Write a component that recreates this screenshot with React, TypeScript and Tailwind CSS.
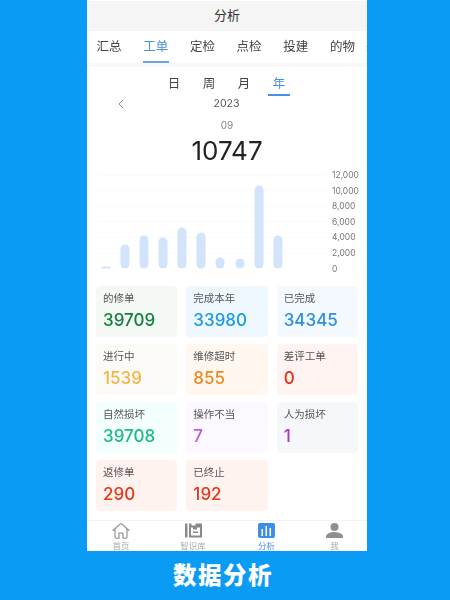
const FONT = '[font-family:Inter,"Noto_Sans_CJK_SC",sans-serif]'

const TABS = ['汇总', '工单', '定检', '点检', '投建', '的物']
const PERIODS = ['日', '周', '月', '年']

const CARDS = [
  { label: '的修单', value: '39709', bg: 'bg-[#f4f9f6]', color: 'text-[#15803d]' },
  { label: '完成本年', value: '33980', bg: 'bg-[#f0f8ff]', color: 'text-[#1a9be6]' },
  { label: '已完成', value: '34345', bg: 'bg-[#f3f9ff]', color: 'text-[#2b8fe3]' },
  { label: '进行中', value: '1539', bg: 'bg-[#fbfaf6]', color: 'text-[#f2b544]' },
  { label: '维修超时', value: '855', bg: 'bg-[#fff7f0]', color: 'text-[#ee8a1d]' },
  { label: '差评工单', value: '0', bg: 'bg-[#fff4f2]', color: 'text-[#e5301b]' },
  { label: '自然损坏', value: '39708', bg: 'bg-[#f2fffc]', color: 'text-[#1fb98a]' },
  { label: '操作不当', value: '7', bg: 'bg-[#fdf7ff]', color: 'text-[#bb5fd8]' },
  { label: '人为损坏', value: '1', bg: 'bg-[#f6f7fb]', color: 'text-[#a838c8]' },
  { label: '返修单', value: '290', bg: 'bg-[#fff3f0]', color: 'text-[#e5391c]' },
  { label: '已终止', value: '192', bg: 'bg-[#fff3f0]', color: 'text-[#e5391c]' },
]

const BARS = [
  { x: 19, h: 2 },
  { x: 38, h: 24 },
  { x: 57, h: 33 },
  { x: 76, h: 31 },
  { x: 95, h: 41 },
  { x: 114, h: 36 },
  { x: 133, h: 11 },
  { x: 153, h: 10 },
  { x: 172, h: 83 },
  { x: 191, h: 33 },
]
const LABELS = ['12,000', '10,000', '8,000', '6,000', '4,000', '2,000', '0']

function Chart() {
  return (
    <svg width="280" height="106" className="block">
      {LABELS.map((l, i) => {
        const y = 7 + i * 15.6
        return (
          <g key={l}>
            {i < 6 && <line x1="10" x2="240" y1={y} y2={y} stroke="#fafafa" strokeWidth="1" />}
            <text x="245" y={y + 3} fontSize="8.500" fill="#777" fontFamily="Inter, sans-serif">
              {l}
            </text>
          </g>
        )
      })}
      {BARS.map((b) => (
        <rect key={b.x} x={b.x - 4.5} y={100.5 - b.h} width="9" height={b.h} rx={b.h < 4 ? 1 : 4.5} fill="#d2e4fb" />
      ))}
    </svg>
  )
}

function HomeIcon() {
  return (
    <svg width="18" height="16" viewBox="0 0 18 16" fill="none" stroke="#8a8a8a" strokeWidth="1.1" strokeLinejoin="round" strokeLinecap="round">
      <path d="M1 7.500 7.800 1.400a1.800 1.800 0 0 1 2.400 0L17 7.500" />
      <path d="M3 6.500V14a1.200 1.200 0 0 0 1.200 1.200H7V10h4v5.200h2.800A1.200 1.200 0 0 0 15 14V6.500" />
    </svg>
  )
}

function BookIcon() {
  return (
    <svg width="17" height="15" viewBox="0 0 17 15" fill="#8a8a8a">
      <rect x="0" y="0.500" width="2.500" height="14" rx="0.500" />
      <path fillRule="evenodd" d="M4 .5h2.500v2h4v-2H17v14H4zM6 4.500v8h9v-8h-3v2H8v-2zm2 4h5V10H8z" />
    </svg>
  )
}

function ChartIcon() {
  return (
    <svg width="17" height="15" viewBox="0 0 17 15">
      <rect width="17" height="15" rx="2" fill="#3b8fe6" />
      <rect x="3.500" y="6" width="1.500" height="7" fill="#fff" />
      <rect x="7.500" y="3" width="1.500" height="10" fill="#fff" />
      <rect x="11.500" y="5" width="1.500" height="8" fill="#fff" />
    </svg>
  )
}

function UserIcon() {
  return (
    <svg width="17" height="15" viewBox="0 0 17 15" fill="#8f8f8f">
      <circle cx="8.500" cy="4" r="4" />
      <path d="M0 15v-1.500C0 11 4 9 8.500 9s8.500 2 8.500 4.500V15z" />
    </svg>
  )
}

const NAV = [
  { label: '首页', icon: <HomeIcon />, active: false },
  { label: '智识库', icon: <BookIcon />, active: false },
  { label: '分析', icon: <ChartIcon />, active: true },
  { label: '我', icon: <UserIcon />, active: false },
]

export default function App() {
  return (
    <div className={`w-[450px] h-[600px] overflow-hidden bg-[#0a9bf5] flex flex-col ${FONT}`}>
      <div className="w-[280px] h-[551px] ml-[87px] bg-white flex flex-col blur-[0.4px]">
        <div className="h-[30px] mt-[1px] bg-[#f5f5f5] flex items-center justify-center text-[13px] text-[#333]">分析</div>

        {/* tabs */}
        <div className="h-[32px] flex ml-[-1.300px] text-[12.500px] text-[#444] overflow-hidden">
          {TABS.map((t) => {
            const on = t === '工单'
            return (
              <div key={t} className="w-[46.700px] shrink-0 flex justify-center">
                <span className={`w-[26px] flex items-center justify-center pt-[2px] border-b-2 whitespace-nowrap ${on ? 'text-[#4a90e2] border-[#6aa5e8]' : 'border-transparent'}`}>
                  {t}
                </span>
              </div>
            )
          })}
          <span className="shrink-0 pt-[9px] text-[10px] text-[#777]">:</span>
        </div>
        <div className="h-[4px] bg-[#f8f8f8]" />

        {/* period */}
        <div className="flex justify-center pr-[1px] mt-[9px] gap-[13px] text-[12.500px] text-[#444]">
          {PERIODS.map((p) => (
            <div key={p} className={`w-[22px] h-[20px] leading-[16px] text-center border-b-2 ${p === '年' ? 'text-[#4a90e2] border-[#4a90e2]' : 'border-transparent'}`}>
              {p}
            </div>
          ))}
        </div>
        <div className="relative h-[16px] flex items-center justify-center pr-[1px] text-[10.500px] text-[#555]">
          <svg width="7" height="10" viewBox="0 0 7 10" fill="none" stroke="#888" className="absolute left-[30px] top-[3px]">
            <path d="M6 1 2 5l4 4" />
          </svg>
          2023
        </div>
        <div className="mt-[7px] text-center text-[10px] leading-[12px] text-[#888]">09</div>
        <div className="mt-[5px] text-center text-[26px] leading-[30px] text-[#222]">10747</div>

        <div className="mt-[2px]"><Chart /></div>

        {/* cards */}
        <div className="mt-[12px] px-[9px] grid grid-cols-3 gap-x-[9px] gap-y-[7.500px]">
          {CARDS.map((c) => (
            <div key={c.label} className={`h-[50.500px] rounded-[4px] px-[7px] pt-[6px] ${c.bg}`}>
              <div className="text-[10.500px] leading-[13px] text-[#555]">{c.label}</div>
              <div className={`text-[17px] leading-[22px] mt-[4px] font-medium ${c.color}`}>{c.value}</div>
            </div>
          ))}
        </div>

        {/* bottom nav */}
        <div className="mt-auto h-[31px] border-t border-[#f3f3f3] grid grid-cols-[68px_76px_71px_65px]">
          {NAV.map((n) => (
            <div key={n.label} className="flex flex-col items-center pt-[1px]">
              <div className="h-[17px] flex items-center">{n.icon}</div>
              <div className={`text-[8.500px] mt-[2px] leading-[11px] ${n.active ? 'text-[#4a90e2]' : 'text-[#aaa]'}`}>{n.label}</div>
            </div>
          ))}
        </div>
      </div>
      <div className="flex-1 flex items-center justify-center text-white font-black text-[23.500px] tracking-[1.500px] pr-[4px]">数据分析</div>
    </div>
  )
}
